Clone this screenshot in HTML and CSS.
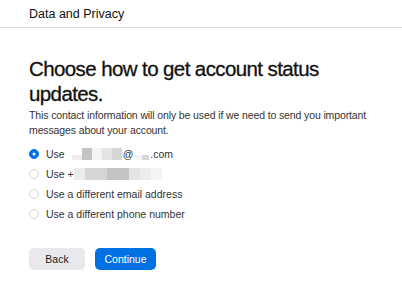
FILE: index.html
```html
<!DOCTYPE html>
<html>
  <head>
    <meta charset="utf-8" />
    <title>Data and Privacy</title>
    <link rel="stylesheet" href="styles.css">
  </head>
  <body>
    <div class="topbar">Data and Privacy</div>
    <div class="content">
      <h1>Choose how to get account status updates.</h1>
      <p class="note">This contact information will only be used if we need to send you important messages about your account.</p>
      <form class="options">
        <label class="option">
          <input type="radio" name="contact" checked>
          <span class="radio"></span>
          <span>Use</span>
          <span class="blur email">
            <i class="b5 low"></i><i class="b2"></i><i class="b6"></i><i class="b4"></i><i class="b3"></i>
          </span>
          <span>@</span>
          <span class="blur small">
            <i class="b6 low"></i><i class="b3 low"></i>
          </span>
          <span>.com</span>
        </label>
        <label class="option">
          <input type="radio" name="contact">
          <span class="radio"></span>
          <span>Use +</span>
          <span class="blur phone">
            <i class="b5"></i><i class="b3"></i><i class="b3"></i><i class="b2"></i><i class="b2"></i><i class="b4"></i><i class="b5"></i><i class="b6"></i>
          </span>
        </label>
        <label class="option">
          <input type="radio" name="contact">
          <span class="radio"></span>
          <span>Use a different email address</span>
        </label>
        <label class="option">
          <input type="radio" name="contact">
          <span class="radio"></span>
          <span>Use a different phone number</span>
        </label>
      </form>
      <div class="actions">
        <button class="btn secondary">Back</button>
        <button class="btn primary">Continue</button>
      </div>
    </div>
  </body>
</html>
```

FILE: styles.css
```css
body {
  margin: 0;
  font-family: "Liberation Sans", Arial, sans-serif;
  color: #1d1d1f;
  background: #fff;
}
.topbar {
  font-size: 12.5px;
  padding: 5px 29px 0;
  height: 22px;
  line-height: 18px;
  border-bottom: 1px solid #e0e0e0;
  color: #111;
}
.content {
  padding: 0 29px;
}
h1 {
  font-size: 20.5px;
  font-weight: normal;
  line-height: 25px;
  letter-spacing: -0.6px;
  margin: 28px 0 0;
  color: #111;
  -webkit-text-stroke: 0.3px #111;
}
.note {
  font-size: 10.5px;
  line-height: 14.5px;
  letter-spacing: -0.12px;
  color: #333;
  margin: 2px 0 0;
}
.options {
  display: flex;
  flex-direction: column;
  margin-top: 7px;
}
.option {
  display: flex;
  align-items: center;
  height: 20px;
  font-size: 10.5px;
  color: #333;
}
.option input {
  display: none;
}
.radio {
  width: 10px;
  height: 10px;
  border: 1px solid #d6d6db;
  border-radius: 50%;
  margin-right: 7px;
  box-sizing: border-box;
  display: inline-block;
  position: relative;
}
.option input:checked + .radio {
  background: #0071e3;
  border-color: #0071e3;
}
.option input:checked + .radio::after {
  content: "";
  position: absolute;
  left: 3px;
  top: 3px;
  width: 2px;
  height: 2px;
  border-radius: 50%;
  background: #fff;
  box-shadow: 0 0 0 0.5px #fff;
}
.blur {
  display: inline-flex;
  align-items: flex-end;
  height: 12px;
}
.blur.email {
  margin: 0 1px 0 7px;
}
.blur.small {
  margin: 0 1px 0 2px;
}
.blur i {
  width: 10px;
  height: 12px;
  display: block;
}
.blur i.low {
  height: 5px;
}
.blur.small i {
  width: 7px;
}
.blur.phone i {
  width: 11px;
}
.b2 { background: #c4c4c4; }
.b3 { background: #d6d6d6; }
.b4 { background: #e4e4e4; }
.b5 { background: #ececec; }
.b6 { background: #f4f4f4; }
.actions {
  display: flex;
  gap: 10px;
  margin-top: 24px;
}
.btn {
  font-family: inherit;
  font-size: 10.5px;
  height: 22px;
  border: none;
  border-radius: 5px;
  padding: 0;
  cursor: pointer;
}
.secondary {
  background: #e8e8ed;
  color: #1d1d1f;
  width: 56px;
}
.primary {
  background: #0071e3;
  color: #fff;
  width: 61px;
}
```
